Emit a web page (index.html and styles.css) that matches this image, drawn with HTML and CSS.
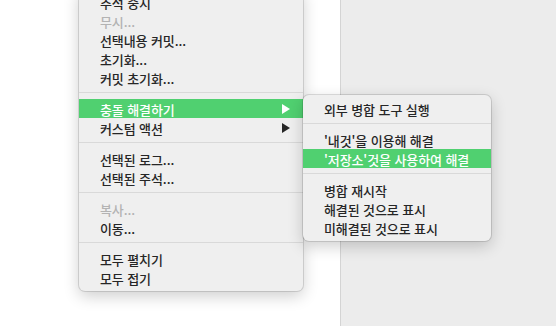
FILE: index.html
```html
<!DOCTYPE html>
<html lang="ko">
<head>
    <meta charset="UTF-8">
    <meta name="viewport" content="width=device-width, initial-scale=1.0">
    <title>충돌 해결하기</title>
    <link rel="stylesheet" href="styles.css">
</head>
<body>
    <div class="window">
        <div class="file-pane"></div>
        <div class="side-pane"></div>
    </div>

    <!-- context menu -->
    <ul class="menu main-menu">
        <li class="item">추적 중지</li>
        <li class="item disabled">무시...</li>
        <li class="item">선택내용 커밋...</li>
        <li class="item">초기화...</li>
        <li class="item">커밋 초기화...</li>
        <li class="separator"></li>
        <li class="item active has-sub">충돌 해결하기
            <svg class="arrow" width="8" height="10" viewBox="0 0 8 10"><path d="M0 0 L8 5 L0 10 Z"/></svg>
        </li>
        <li class="item has-sub">커스텀 액션
            <svg class="arrow" width="8" height="10" viewBox="0 0 8 10"><path d="M0 0 L8 5 L0 10 Z"/></svg>
        </li>
        <li class="separator"></li>
        <li class="item">선택된 로그...</li>
        <li class="item">선택된 주석...</li>
        <li class="separator"></li>
        <li class="item disabled">복사...</li>
        <li class="item">이동...</li>
        <li class="separator"></li>
        <li class="item">모두 펼치기</li>
        <li class="item">모두 접기</li>
    </ul>

    <!-- submenu -->
    <ul class="menu sub-menu">
        <li class="item">외부 병합 도구 실행</li>
        <li class="separator"></li>
        <li class="item">'내것'을 이용해 해결</li>
        <li class="item active">'저장소'것을 사용하여 해결</li>
        <li class="separator"></li>
        <li class="item">병합 재시작</li>
        <li class="item">해결된 것으로 표시</li>
        <li class="item">미해결된 것으로 표시</li>
    </ul>
</body>
</html>
```

FILE: styles.css
```css
body {
    margin: 0;
    font-family: 'Noto Sans CJK KR', 'Noto Sans', sans-serif;
    overflow: hidden;
}

.window {
    display: flex;
    height: 326px;
}

.file-pane {
    width: 340px;
    background: #ffffff;
    border-right: 1px solid #d4d4d4;
}

.side-pane {
    flex: 1;
    background: #ececec;
}

.menu {
    position: absolute;
    margin: 0;
    padding: 4px 0;
    list-style: none;
    background: #efefef;
    border-radius: 6px;
    box-sizing: border-box;
    box-shadow: 0 0 0 1px rgba(0, 0, 0, 0.12), 0 5px 16px rgba(0, 0, 0, 0.2);
}

.main-menu {
    left: 79px;
    top: -12px;
    width: 224px;
}

.sub-menu {
    left: 303px;
    top: 95px;
    width: 188px;
}

.item {
    display: flex;
    align-items: center;
    justify-content: space-between;
    height: 19px;
    padding: 1px 13px 0 21px;
    box-sizing: border-box;
    font-size: 13px;
    font-weight: 500;
    letter-spacing: -0.1px;
    color: #262626;
    white-space: nowrap;
}

.item.disabled {
    color: #b3b3b3;
}

.item.active {
    background: #50d070;
    color: #ffffff;
}

.arrow {
    fill: #262626;
    margin-top: -1px;
}

.item.active .arrow {
    fill: #ffffff;
}

.separator {
    height: 1px;
    margin: 5px 0 6px;
    background: #d9d9d9;
}
```
